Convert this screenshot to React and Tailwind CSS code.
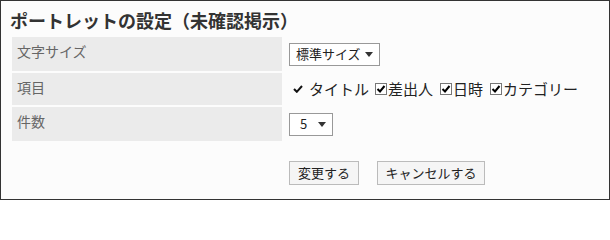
import React from 'react';

const font = { fontFamily: '"Noto Sans CJK JP", "Noto Sans", sans-serif' };

function Arrow() {
  return (
    <svg width="8" height="5" viewBox="0 0 8 5" className="shrink-0">
      <path d="M0 0 H8 L4 5 Z" fill="#333" />
    </svg>
  );
}

function Box() {
  return (
    <svg width="12" height="12" viewBox="0 0 12 12" className="shrink-0">
      <rect x="0.5" y="0.5" width="11" height="11" fill="#fff" stroke="#777" />
      <path d="M2.5 6 L5 8.5 L9.5 3" fill="none" stroke="#000" strokeWidth="2" />
    </svg>
  );
}

function Check() {
  return (
    <svg width="10" height="8" viewBox="0 0 10 8" className="shrink-0">
      <path d="M1 4 L3.8 6.8 L9 1" fill="none" stroke="#111" strokeWidth="2" />
    </svg>
  );
}

function Row({ label, children, h }) {
  return (
    <div className={`flex ${h}`}>
      <div className="w-[270px] shrink-0 bg-[#ebebeb] pl-[5px] pt-[5px] text-[14px] leading-[18px] text-[#666]">
        {label}
      </div>
      <div className="flex items-center pl-[7px]">{children}</div>
    </div>
  );
}

export default function App() {
  return (
    <div
      className="w-[610px] h-[200px] border border-[#333] bg-[#fcfcfc] text-[#222]"
      style={font}
    >
      <div className="h-[36px] pl-[9px] pt-[7px] text-[18px] font-bold leading-[24px] text-[#333]">
        ポートレットの設定（未確認掲示）
      </div>

      <div className="ml-[11px] flex flex-col gap-[2px]">
        <Row label="文字サイズ" h="h-[34px]">
          <div className="flex h-[23px] w-[91px] items-center justify-between border border-[#999] bg-white pl-[6px] pr-[6px] text-[13px]">
            <span>標準サイズ</span>
            <Arrow />
          </div>
        </Row>
        <Row label="項目" h="h-[32px]">
          <div className="flex items-center text-[15px] leading-[20px]">
            <span className="ml-[4px]">
              <Check />
            </span>
            <span className="ml-[6px] mr-[6px]">タイトル</span>
            <Box />
            <span className="ml-[1px] mr-[7px]">差出人</span>
            <Box />
            <span className="ml-[1px] mr-[7px]">日時</span>
            <Box />
            <span className="ml-[1px]">カテゴリー</span>
          </div>
        </Row>
        <Row label="件数" h="h-[34px]">
          <div className="flex h-[23px] w-[44px] items-center justify-between border border-[#999] bg-white pl-[10px] pr-[6px] text-[13px]">
            <span>5</span>
            <Arrow />
          </div>
        </Row>
      </div>

      <div className="ml-[288px] mt-[20px] flex gap-[18px] text-[13px]">
        <button className="flex h-[24px] w-[70px] items-center justify-center border border-[#bbb] bg-[#f5f5f5] text-[#222]">
          変更する
        </button>
        <button className="flex h-[24px] w-[108px] items-center justify-center border border-[#bbb] bg-[#f5f5f5] text-[#222]">
          キャンセルする
        </button>
      </div>
    </div>
  );
}
